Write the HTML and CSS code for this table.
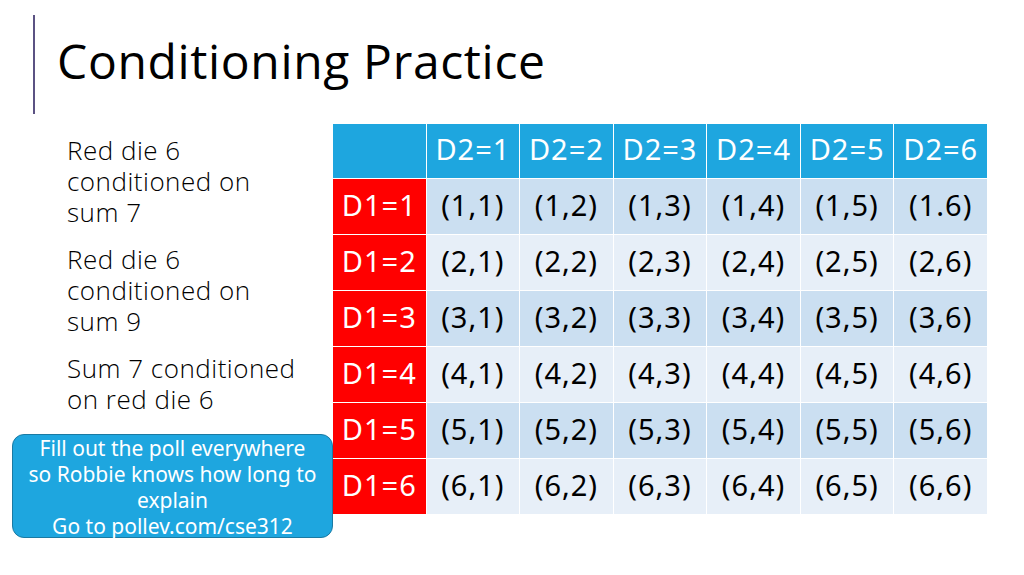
FILE: index.html
```html
<!DOCTYPE html>
<html>
<head>
<meta charset="utf-8">
<link rel="stylesheet" href="styles.css">
</head>
<body>
<div class="slide">
  <header class="title-bar">
    <h1 class="title">Conditioning Practice</h1>
  </header>
  <main class="content">
    <div class="questions">
      <p class="q">Red die 6<br>conditioned on<br>sum 7</p>
      <p class="q">Red die 6<br>conditioned on<br>sum 9</p>
      <p class="q">Sum 7 conditioned<br>on red die 6</p>
    </div>
    <table class="grid">
      <tr class="head">
        <th></th><th>D2=1</th><th>D2=2</th><th>D2=3</th><th>D2=4</th><th>D2=5</th><th>D2=6</th>
      </tr>
      <tr class="odd"><th class="rh">D1=1</th><td>(1,1)</td><td>(1,2)</td><td>(1,3)</td><td>(1,4)</td><td>(1,5)</td><td>(1.6)</td></tr>
      <tr class="even"><th class="rh">D1=2</th><td>(2,1)</td><td>(2,2)</td><td>(2,3)</td><td>(2,4)</td><td>(2,5)</td><td>(2,6)</td></tr>
      <tr class="odd"><th class="rh">D1=3</th><td>(3,1)</td><td>(3,2)</td><td>(3,3)</td><td>(3,4)</td><td>(3,5)</td><td>(3,6)</td></tr>
      <tr class="even"><th class="rh">D1=4</th><td>(4,1)</td><td>(4,2)</td><td>(4,3)</td><td>(4,4)</td><td>(4,5)</td><td>(4,6)</td></tr>
      <tr class="odd"><th class="rh">D1=5</th><td>(5,1)</td><td>(5,2)</td><td>(5,3)</td><td>(5,4)</td><td>(5,5)</td><td>(5,6)</td></tr>
      <tr class="even"><th class="rh">D1=6</th><td>(6,1)</td><td>(6,2)</td><td>(6,3)</td><td>(6,4)</td><td>(6,5)</td><td>(6,6)</td></tr>
    </table>
  </main>
  <div class="callout">Fill out the poll everywhere<br>so Robbie knows how long to<br>explain<br>Go to pollev.com/cse312</div>
</div>
</body>
</html>
```

FILE: styles.css
```css
html, body {
  margin: 0;
  padding: 0;
  background: #ffffff;
}
.slide {
  position: relative;
  width: 1024px;
  height: 575px;
  overflow: hidden;
  font-family: "Noto Sans", "Open Sans", sans-serif;
  color: #000;
}
.title-bar {
  margin: 15px 0 0 33px;
  height: 99px;
  border-left: 2px solid #5b5283;
  display: flex;
  align-items: center;
}
.title {
  margin: 0 0 8px 22px;
  font-family: "Open Sans", "Noto Sans", sans-serif;
  font-weight: 400;
  font-size: 48px;
  line-height: 1;
  letter-spacing: 0.65px;
}
.content {
  display: flex;
  margin-top: 9px;
  padding-left: 67px;
}
.questions {
  width: 265px;
  flex: none;
  padding-top: 12px;
}
.q {
  margin: 0 0 16px 0;
  font-family: "Open Sans", "Noto Sans", sans-serif;
  font-weight: 350;
  font-size: 26px;
  line-height: 31px;
  letter-spacing: 0.5px;
}
.grid {
  border-collapse: collapse;
  table-layout: fixed;
  width: 656px;
  flex: none;
  font-size: 29px;
  letter-spacing: 1px;
  font-family: "Noto Sans", "Open Sans", sans-serif;
}
.grid th, .grid td {
  border: 1.5px solid #ffffff;
  text-align: center;
  padding: 0 0 5px 0;
  font-weight: 400;
  white-space: nowrap;
}
.grid tr {
  height: 56px;
}
.grid tr.head {
  height: 55px;
  background: #1ea6df;
  color: #ffffff;
}
.grid th.rh {
  background: #ff0000;
  color: #ffffff;
}
.grid tr.odd td {
  background: #cbdff1;
}
.grid tr.even td {
  background: #e7eff8;
}
.callout {
  position: absolute;
  left: 12px;
  top: 434px;
  width: 321px;
  height: 104px;
  box-sizing: border-box;
  background: #1ea6df;
  border: 1px solid #1a7aa3;
  border-radius: 12px;
  color: #ffffff;
  font-size: 21px;
  line-height: 26px;
  text-align: center;
}
```
